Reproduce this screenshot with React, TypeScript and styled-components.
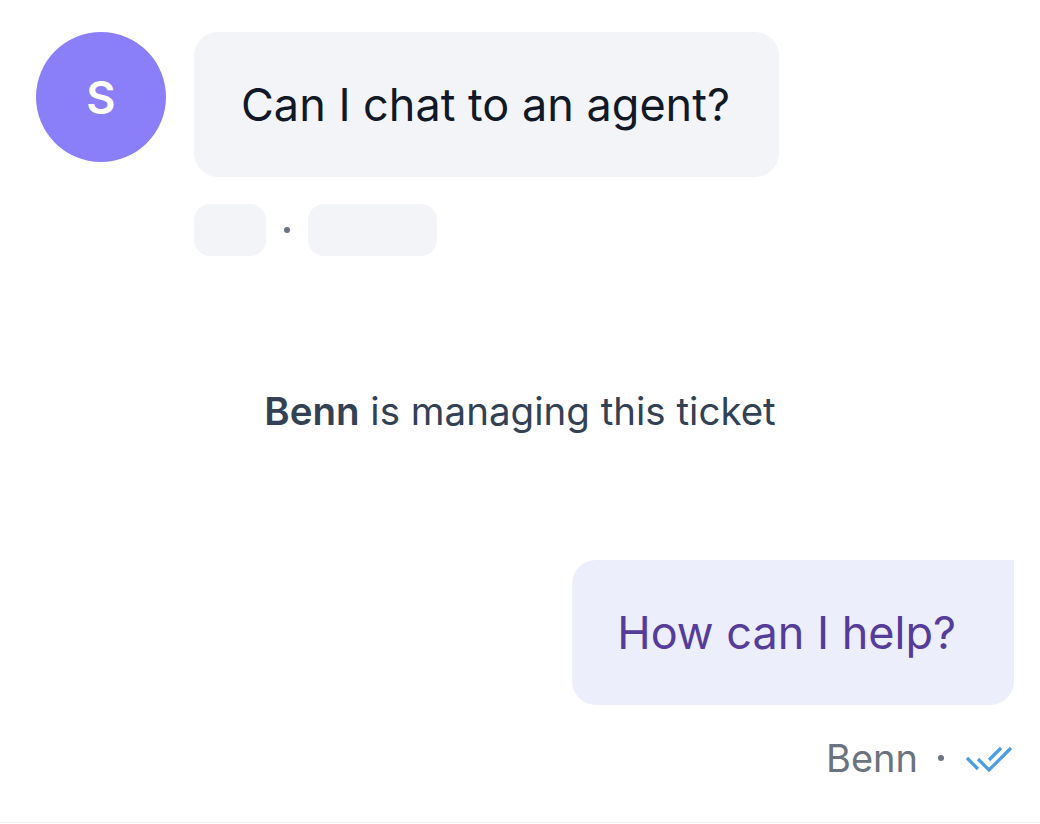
import React from 'react';
import styled, { createGlobalStyle } from 'styled-components';

const GlobalStyle = createGlobalStyle`
    html, body {
        margin: 0;
        padding: 0;
        background: #ffffff;
    }
    body {
        font-family: Inter, "Noto Sans", sans-serif;
        -webkit-font-smoothing: antialiased;
    }
`;

const Page = styled.div`
    box-sizing: border-box;
    height: 823px;
    padding: 32px 26px 0 26px;
    border-bottom: 1px solid #eef0f3;
    display: flex;
    flex-direction: column;
`;

const IncomingRow = styled.div`
    display: flex;
    align-items: flex-start;
    gap: 28px;
    padding-left: 10px;
`;

const Avatar = styled.div`
    width: 130px;
    height: 130px;
    flex-shrink: 0;
    border-radius: 50%;
    background: #8a7ff8;
    color: #ffffff;
    display: flex;
    align-items: center;
    justify-content: center;
    font-size: 45px;
    font-weight: 600;
`;

const Column = styled.div<{ align?: 'start' | 'end' }>`
    display: flex;
    flex-direction: column;
    align-items: ${p => (p.align === 'end' ? 'flex-end' : 'flex-start')};
`;

const Bubble = styled.div<{ outgoing?: boolean }>`
    box-sizing: border-box;
    height: 145px;
    display: flex;
    align-items: center;
    padding: ${p => (p.outgoing ? '0 58px 0 45px' : '0 49px 0 47px')};
    border-radius: ${p => (p.outgoing ? '24px 0 24px 24px' : '24px')};
    background: ${p => (p.outgoing ? '#eceefb' : '#f3f4f8')};
    color: ${p => (p.outgoing ? '#553c9a' : '#111827')};
    font-size: 45px;
    line-height: 54px;
`;

const MetaRow = styled.div<{ gap: number }>`
    display: flex;
    align-items: center;
    gap: ${p => p.gap}px;
`;

const Skeleton = styled.div<{ w: number }>`
    width: ${p => p.w}px;
    height: 52px;
    border-radius: 16px;
    background: #f3f4f8;
`;

const Dot = styled.span`
    width: 6px;
    height: 6px;
    border-radius: 50%;
    background: #6b7280;
`;

const SystemNote = styled.p`
    margin: 0;
    text-align: center;
    font-size: 38.5px;
    line-height: 48px;
    color: #334155;

    b {
        font-weight: 600;
    }
`;

const MetaName = styled.span`
    font-size: 38px;
    line-height: 40px;
    color: #6b7280;
`;

const DoubleCheck = () => (
    <svg width="50" height="28" viewBox="963 743 50 28" fill="none">
        <g stroke="#4a9de0" strokeWidth="3.2">
            <path d="M966 757 L977 768" />
            <path d="M977 758 L988 769 L1010 747" />
            <path d="M988 759 L1000 747" />
        </g>
    </svg>
);

const App: React.FC = () => {
    return (
        <>
            <GlobalStyle />
            <Page>
                <IncomingRow>
                    <Avatar>S</Avatar>
                    <Column>
                        <Bubble>Can I chat to an agent?</Bubble>
                        <MetaRow gap={18} style={{ marginTop: 27 }}>
                            <Skeleton w={72} />
                            <Dot />
                            <Skeleton w={129} />
                        </MetaRow>
                    </Column>
                </IncomingRow>

                <SystemNote style={{ marginTop: 131 }}>
                    <b>Benn</b> is managing this ticket
                </SystemNote>

                <Column align="end" style={{ marginTop: 125 }}>
                    <Bubble outgoing>How can I help?</Bubble>
                    <MetaRow gap={20} style={{ marginTop: 33 }}>
                        <MetaName>Benn</MetaName>
                        <Dot />
                        <DoubleCheck />
                    </MetaRow>
                </Column>
            </Page>
        </>
    );
};

export default App;
